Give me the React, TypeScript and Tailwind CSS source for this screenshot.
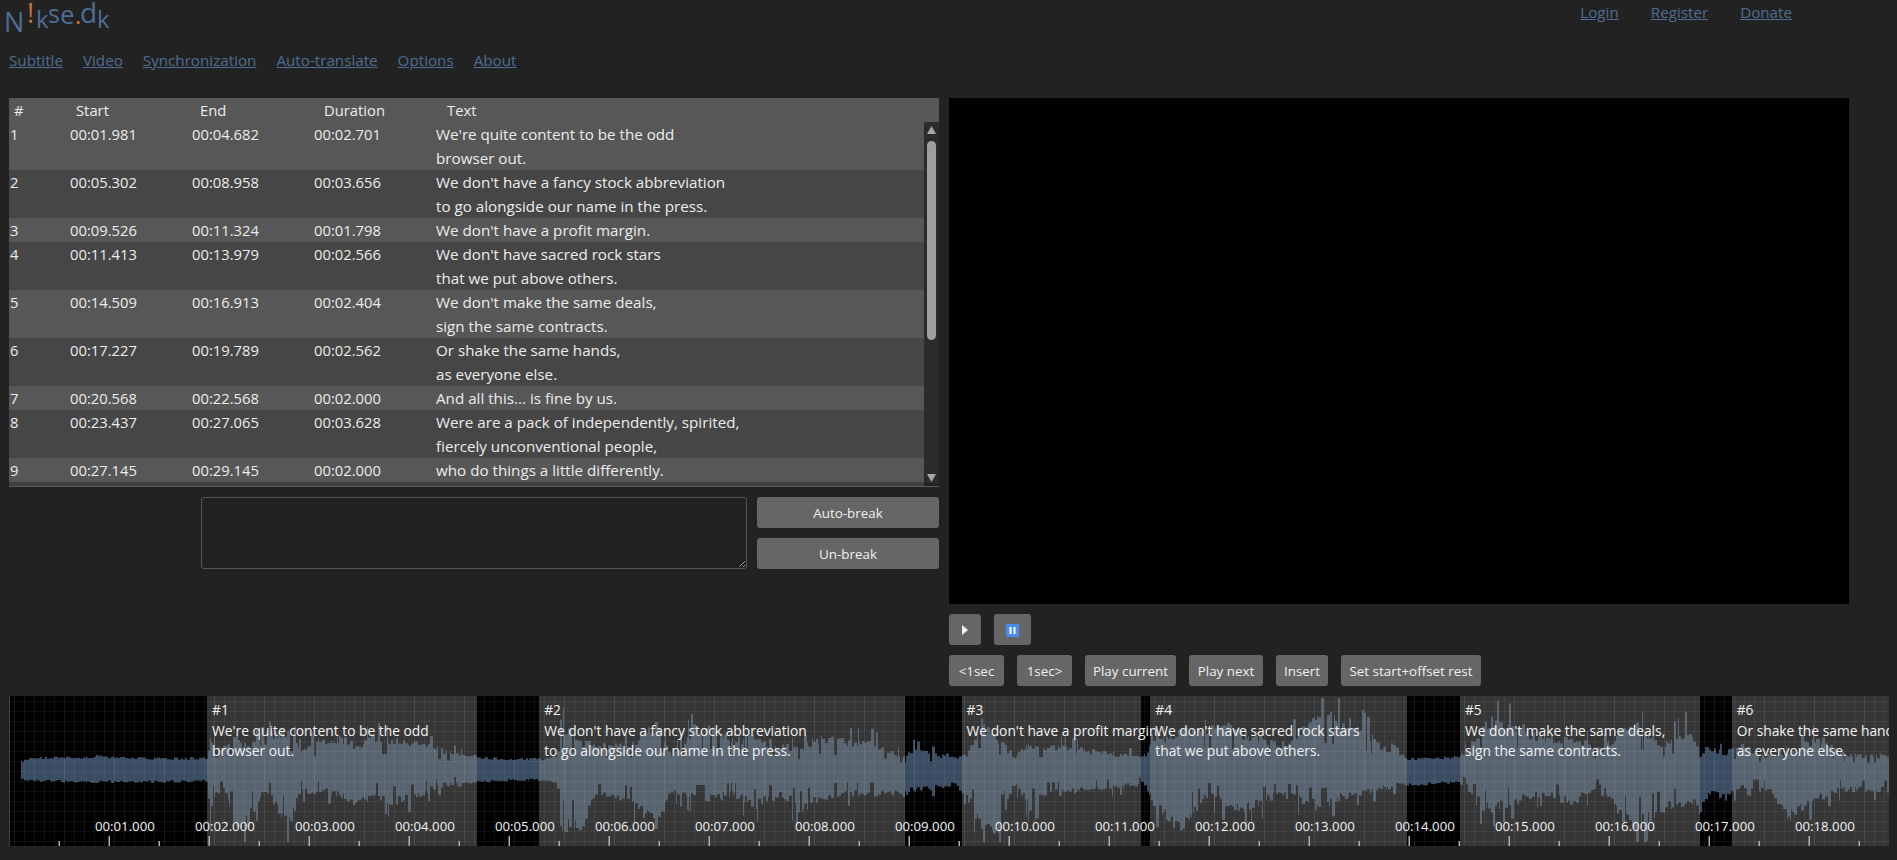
import { ReactNode } from "react";

const LINK = "text-[#4f6d94] underline";
const NAV = ["Subtitle", "Video", "Synchronization", "Auto-translate", "Options", "About"];
const BUTTONS = [
  { label: "<1sec", width: "w-[55px]" },
  { label: "1sec>", width: "w-[55px]" },
  { label: "Play current", width: "w-[91px]" },
  { label: "Play next", width: "w-[74px]" },
  { label: "Insert", width: "w-[52px]" },
  { label: "Set start+offset rest", width: "w-[140px]" },
];

const ROWS = [
  { n: 1, start: "00:01.981", end: "00:04.682", dur: "00:02.701", lines: ["We're quite content to be the odd", "browser out."] },
  { n: 2, start: "00:05.302", end: "00:08.958", dur: "00:03.656", lines: ["We don't have a fancy stock abbreviation", "to go alongside our name in the press."] },
  { n: 3, start: "00:09.526", end: "00:11.324", dur: "00:01.798", lines: ["We don't have a profit margin."] },
  { n: 4, start: "00:11.413", end: "00:13.979", dur: "00:02.566", lines: ["We don't have sacred rock stars", "that we put above others."] },
  { n: 5, start: "00:14.509", end: "00:16.913", dur: "00:02.404", lines: ["We don't make the same deals,", "sign the same contracts."] },
  { n: 6, start: "00:17.227", end: "00:19.789", dur: "00:02.562", lines: ["Or shake the same hands,", "as everyone else."] },
  { n: 7, start: "00:20.568", end: "00:22.568", dur: "00:02.000", lines: ["And all this... is fine by us."] },
  { n: 8, start: "00:23.437", end: "00:27.065", dur: "00:03.628", lines: ["Were are a pack of independently, spirited,", "fiercely unconventional people,"] },
  { n: 9, start: "00:27.145", end: "00:29.145", dur: "00:02.000", lines: ["who do things a little differently."] },
];

// seconds on the timeline, 100px per second
const REGIONS = [
  { n: 1, from: 1.981, to: 4.682 },
  { n: 2, from: 5.302, to: 8.958 },
  { n: 3, from: 9.526, to: 11.324 },
  { n: 4, from: 11.413, to: 13.979 },
  { n: 5, from: 14.509, to: 16.913 },
  { n: 6, from: 17.227, to: 18.8 },
];

// [page x, amplitude up, amplitude down]
const ENVELOPE: [number, number, number][] = [
  [21, 9, 9], [30, 12, 11], [100, 14, 12], [150, 12, 12], [205, 12, 11], [210, 35, 50], [220, 26, 12], [233, 40, 62], [246, 28, 65],
  [265, 38, 22], [287, 50, 70], [300, 24, 26], [320, 36, 27], [340, 40, 30], [355, 30, 45], [375, 40, 30], [390, 36, 40],
  [410, 35, 35], [440, 25, 20], [470, 15, 13], [480, 12, 11], [540, 11, 10], [556, 14, 12], [560, 55, 70], [580, 35, 72], [593, 30, 35],
  [613, 30, 30], [630, 30, 40], [657, 55, 70], [670, 14, 26], [693, 50, 36], [713, 50, 36], [733, 36, 30], [753, 40, 46],
  [780, 30, 30], [800, 25, 50], [817, 40, 35], [840, 35, 30], [870, 35, 30], [903, 16, 30], [913, 25, 25], [955, 13, 18],
  [965, 15, 30], [980, 58, 65], [997, 40, 72], [1013, 16, 16], [1030, 32, 46], [1047, 30, 30], [1080, 25, 25], [1113, 20, 22],
  [1143, 17, 17], [1157, 40, 50], [1180, 45, 72], [1207, 55, 30], [1233, 50, 50], [1263, 35, 40], [1280, 30, 30], [1317, 65, 45],
  [1353, 60, 30], [1380, 30, 25], [1407, 11, 15], [1457, 13, 13], [1462, 16, 15], [1483, 60, 50], [1513, 55, 40], [1540, 40, 30],
  [1573, 40, 40], [1600, 25, 20], [1630, 60, 70], [1660, 30, 50], [1687, 50, 40], [1700, 15, 50], [1707, 30, 30], [1723, 20, 35],
  [1740, 30, 20], [1767, 15, 25], [1787, 20, 60], [1817, 40, 35], [1840, 20, 25], [1889, 15, 25],
];

function envelopeAt(x: number): [number, number] {
  for (let i = 1; i < ENVELOPE.length; i++) {
    const [x1, u1, d1] = ENVELOPE[i];
    const [x0, u0, d0] = ENVELOPE[i - 1];
    if (x <= x1) {
      const t = (x - x0) / (x1 - x0);
      return [u0 + (u1 - u0) * t, d0 + (d1 - d0) * t];
    }
  }
  return [15, 25];
}

function buildWavePath() {
  let seed = 4711;
  const rand = () => {
    seed = (seed * 16807) % 2147483647;
    return seed / 2147483647;
  };
  const shake = (amp: number) => {
    const r = rand();
    if (amp <= 16) return amp * (0.86 + rand() * 0.24);
    let k = 0.66 + rand() * 0.26;
    if (r < 0.09) k = 1.2;
    if (r > 0.91) k = 0.42;
    return Math.min(72, amp * k);
  };
  const top: string[] = [];
  const bottom: string[] = [];
  let x = 21;
  while (x < 1889) {
    const w = 1 + Math.floor(rand() * 3);
    const [u, d] = envelopeAt(x);
    const px = x - 9;
    const a = (74 - shake(u)).toFixed(1);
    const b = (74 + shake(d)).toFixed(1);
    top.push(`L${px} ${a}L${px + w} ${a}`);
    bottom.unshift(`L${px + w} ${b}L${px} ${b}`);
    x += w;
  }
  return `M12 74${top.join("")}${bottom.join("")}Z`;
}

const WAVE = buildWavePath();
const GRID = Array.from({ length: 188 }, (_, i) => i * 10);
const GRID_H = Array.from({ length: 15 }, (_, i) => i * 10 + 5);
const TICKS = Array.from({ length: 37 }, (_, i) => (i + 1) * 50);
const SECONDS = Array.from({ length: 18 }, (_, i) => i + 1);

function Logo() {
  return (
    <svg width="120" height="38" className="block overflow-visible" fill="#4f6d94">
      <text x="4" y="32" fontSize="27">N</text>
      <text x="27" y="23" fontSize="27" fill="#c9743c">!</text>
      <text x="36" y="28" fontSize="24">k</text>
      <text x="48" y="23" fontSize="25">s</text>
      <text x="60" y="24" fontSize="26">e</text>
      <text x="75" y="24" fontSize="24" fill="#c9743c">.</text>
      <text x="80" y="23" fontSize="28">d</text>
      <text x="97" y="28" fontSize="24">k</text>
    </svg>
  );
}

function Btn({ className, children }: { className: string; children: ReactNode }) {
  return (
    <button className={`flex h-[31px] items-center justify-center rounded-[3px] bg-[#666666] pt-px text-[13.4px] text-[#f0f0f0] ${className}`}>
      {children}
    </button>
  );
}

function SubtitleTable() {
  return (
    <div className="h-[389px] border-b border-[#5a5a5a]">
      <div className="flex h-6 items-center bg-[#575757] pt-px text-[14.8px] text-[#ececec]">
        <div className="w-[61px] pl-[5px]">#</div>
        <div className="w-[122px] pl-[6px]">Start</div>
        <div className="w-[122px] pl-[8px]">End</div>
        <div className="w-[122px] pl-[10px]">Duration</div>
        <div className="pl-[11px]">Text</div>
      </div>
      <div className="flex h-[364px]">
        <div className="h-full flex-1 overflow-hidden bg-[#3e3e3e]">
          {ROWS.map((r) => (
            <div key={r.n} className={`flex text-[14.8px] leading-6 text-[#ececec] ${r.n % 2 ? "bg-[#575757]" : "bg-[#464646]"}`}>
              <div className="w-[61px] pl-px">{r.n}</div>
              <div className="w-[122px]">{r.start}</div>
              <div className="w-[122px]">{r.end}</div>
              <div className="w-[122px]">{r.dur}</div>
              <div className="text-[15.2px]">
                {r.lines.map((l) => (
                  <div key={l}>{l}</div>
                ))}
              </div>
            </div>
          ))}
        </div>
        <div className="flex h-[361px] w-[15px] flex-col items-center bg-[#2b2b2b] pt-[4px]">
          <svg width="9" height="8" viewBox="0 0 9 8" fill="#a8a8a8"><path d="M4.5 0 9 8H0z" /></svg>
          <div className="mt-[7px] h-[199px] w-[9px] rounded-[5px] bg-[#9e9e9e]" />
          <div className="flex-1" />
          <svg width="9" height="8" viewBox="0 0 9 8" fill="#a8a8a8" className="mb-[1px]"><path d="M0 0h9L4.500 8z" /></svg>
        </div>
      </div>
    </div>
  );
}

function Waveform() {
  return (
    <div className="relative ml-[9px] mt-[10px] h-[150px] w-[1880px] overflow-hidden bg-black">
      <svg width="1880" height="150" className="block">
        <path d={WAVE} fill="#3a4d62" />
      </svg>
      {REGIONS.map((r) => {
        const row = ROWS[r.n - 1];
        return (
          <div
            key={r.n}
            className="absolute top-0 h-full whitespace-nowrap bg-[#888888]/40 pl-[5px] pt-[4px] text-[13.8px] leading-[20.5px] text-[#f2f2f2]"
            style={{ left: r.from * 100, width: (r.to - r.from) * 100 }}
          >
            <div className="relative z-10">#{r.n}</div>
            {row.lines.map((l) => (
              <div key={l} className="relative z-10">{l}</div>
            ))}
          </div>
        );
      })}
      <svg width="1880" height="150" className="absolute left-0 top-0">
        {GRID.map((x) => (
          <rect key={x} x={x + 5} y="0" width="1" height="150" fill="#ffffff" opacity={x % 50 === 0 ? 0.09 : 0.06} />
        ))}
        {GRID_H.map((y) => (
          <rect key={y} x="0" y={y} width="1880" height="1" fill="#ffffff" opacity="0.06" />
        ))}
        <rect x="0" y="0" width="1" height="150" fill="#2f4a2f" />
        {TICKS.map((x) => (
          <rect key={x} x={x - 0.5} y={x % 100 === 0 ? 140 : 145} width="1.5" height={x % 100 === 0 ? 10 : 5} fill="#b0b0b0" />
        ))}
      </svg>
      {SECONDS.map((s) => (
        <div
          key={s}
          className="absolute top-[120px] z-10 whitespace-nowrap text-[13.2px] leading-5 text-[#f2f2f2]"
          style={{ left: s * 100 - 14 }}
        >
          00:{String(s).padStart(2, "0")}.000
        </div>
      ))}
    </div>
  );
}

export default function App() {
  return (
    <div className="h-[860px] overflow-hidden bg-[#222222] font-['Open_Sans',sans-serif]">
      <header className="flex h-[38px] justify-between">
        <Logo />
        <div className="mr-[105px] flex gap-[32px] pt-[2px] text-[15.2px] leading-5">
          <a className={LINK}>Login</a>
          <a className={LINK}>Register</a>
          <a className={LINK}>Donate</a>
        </div>
      </header>
      <nav className="flex h-[60px] gap-[20px] pl-[9px] pt-[12px] text-[15.2px] leading-5">
        {NAV.map((n) => (
          <a key={n} className={LINK}>{n}</a>
        ))}
      </nav>
      <main className="flex h-[588px] gap-[10px] pl-[9px]">
        <section className="w-[930px]">
          <SubtitleTable />
          <div className="mt-[10px] flex gap-[10px] pl-[192px]">
            <textarea className="h-[72px] w-[546px] rounded-[3px] border border-[#555555] bg-transparent" />
            <div className="flex flex-col gap-[10px]">
              <Btn className="w-[182px]">Auto-break</Btn>
              <Btn className="w-[182px]">Un-break</Btn>
            </div>
          </div>
        </section>
        <section className="w-[900px]">
          <div className="h-[506px] bg-black" />
          <div className="mt-[10px] flex gap-[13px]">
            <Btn className="w-[32px]">
              <svg width="6" height="10" viewBox="0 0 6 10" fill="#f4f4f4"><path d="M0 0l6 5-6 5z" /></svg>
            </Btn>
            <Btn className="w-[37px]">
              <svg width="13" height="13" viewBox="0 0 13 13">
                <rect width="13" height="13" rx="2" fill="#4a8df0" />
                <rect x="3.500" y="3" width="2" height="7" fill="#fff" />
                <rect x="7.500" y="3" width="2" height="7" fill="#fff" />
              </svg>
            </Btn>
          </div>
          <div className="mt-[10px] flex gap-[13px]">
            {BUTTONS.map((b) => (
              <Btn key={b.label} className={b.width}>{b.label}</Btn>
            ))}
          </div>
        </section>
      </main>
      <Waveform />
    </div>
  );
}
